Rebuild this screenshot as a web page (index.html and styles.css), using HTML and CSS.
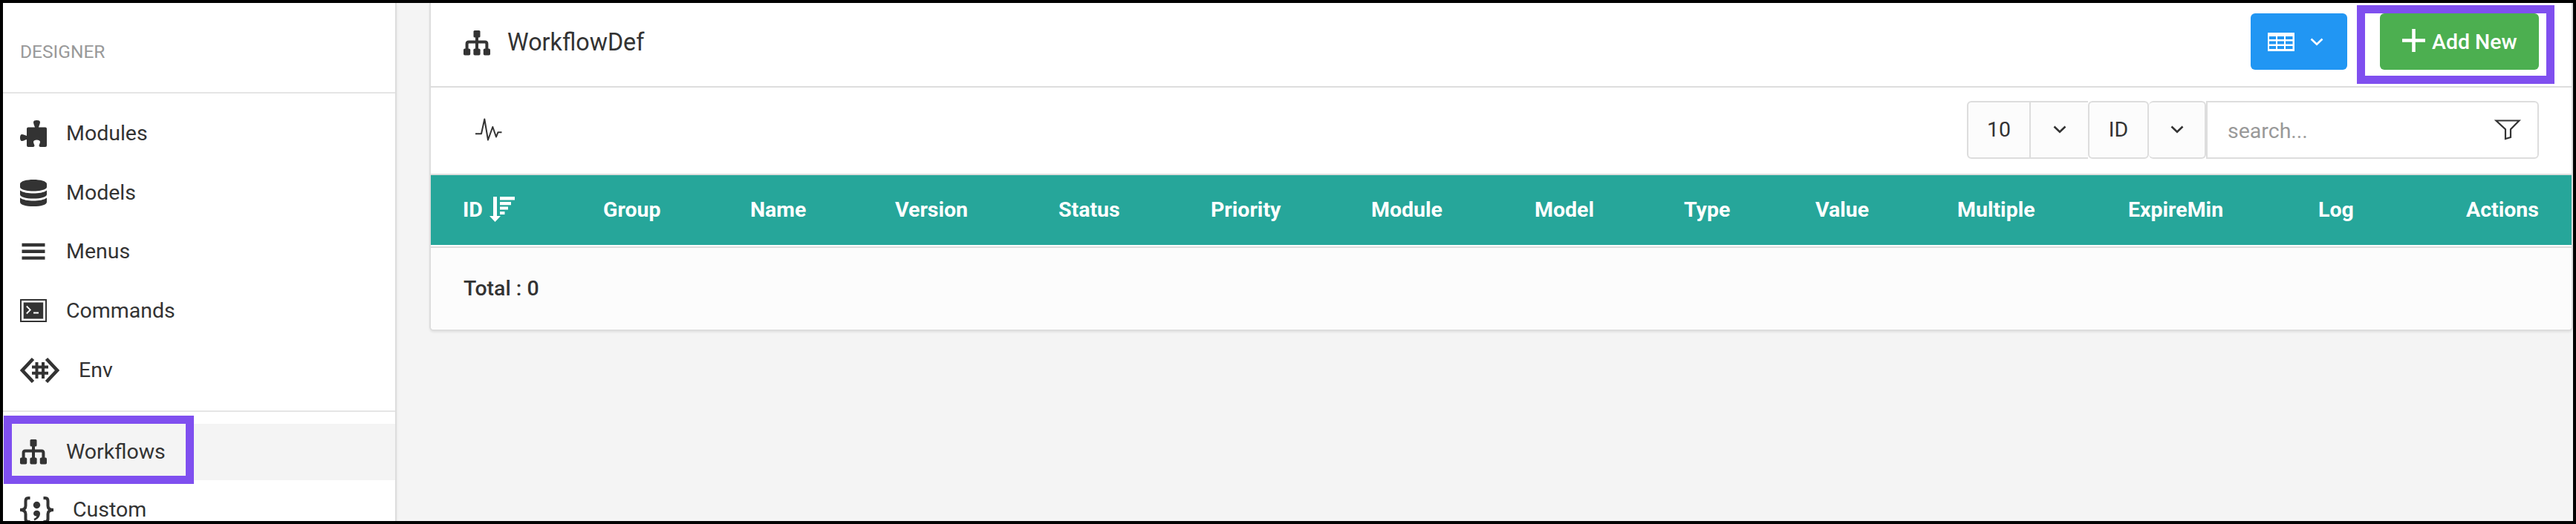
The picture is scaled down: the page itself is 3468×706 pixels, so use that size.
FILE: index.html
```html
<!DOCTYPE html>
<html lang="en">
<head>
<meta charset="utf-8">
<title>WorkflowDef</title>
<link rel="stylesheet" href="styles.css">
</head>
<body>
<svg class="sprite" width="0" height="0">
  <symbol id="tree" viewBox="0 0 36 34">
    <g fill="currentColor"><rect x="13.5" y="0" width="9" height="9.5" rx="1.5"/><rect x="0" y="24.5" width="9.2" height="9" rx="1.8"/><rect x="13.4" y="24.5" width="9.2" height="9" rx="1.8"/><rect x="26.8" y="24.5" width="9.2" height="9" rx="1.8"/></g>
    <path d="M18 8v18M4.6 26V18q0-2.5 2.5-2.5h21.800q2.500 0 2.500 2.500v8" fill="none" stroke="currentColor" stroke-width="4"/>
  </symbol>
  <symbol id="chevron" viewBox="0 0 18 11"><path d="M1.500 1.500L9 8.800l7.500-7.300" fill="none" stroke="currentColor" stroke-width="2.600"/></symbol>
</svg>
<div class="app">
  <aside class="sidebar">
    <div class="section-title">DESIGNER</div>
    <nav class="nav">
      <a class="item tall"><svg class="ico puzzle" viewBox="0 0 36 36"><path fill="currentColor" d="M20 9.500c-1-3-2-5-2-7C18 .8 20 0 22.500 0s4.500.8 4.500 2.500c0 2-1.200 4-2 7H34q2 0 2 2V34q0 2-2 2h-6.500q-2 0-2-2c.5-2 1.500-3 1.500-5 0-1.500-2-2.500-4.500-2.500S18 27.500 18 29c0 2 1 3 1.500 5q0 2-2 2H11q-2 0-2-2v-8c-3 .5-4 2-6.500 2C.8 28 0 26 0 23.500S.8 19 2.500 19c2.500 0 3.500 1.200 6.500 2v-9.500q0-2 2-2z"/></svg>Modules</a>
      <a class="item"><svg class="ico" viewBox="0 0 36 36"><g fill="currentColor"><path d="M18 0c9 0 18 2 18 6v4c0 3-8 5.500-18 5.500S0 13 0 10V6c0-4 9-6 18-6z"/><path d="M0 14.500c4 3 11 4 18 4s14-1 18-4V20c0 3.500-8 5.500-18 5.500S0 23.500 0 20z"/><path d="M0 24.500c4 3 11 4 18 4s14-1 18-4V30c0 4-8 6-18 6S0 34 0 30z"/></g></svg>Models</a>
      <a class="item tall"><svg class="ico" viewBox="0 0 36 36"><path d="M2.500 9h31M2.500 17.800h31M2.500 26.600h31" stroke="currentColor" stroke-width="4.400"/></svg>Menus</a>
      <a class="item tall"><svg class="ico" viewBox="0 0 36 36"><path d="M1 3h34v29H1z" fill="none" stroke="currentColor" stroke-width="2"/><path d="M4.700 6.500h26.500v22H4.700z" fill="currentColor"/><path d="M8.800 11.500l5 5-5 5M18 20.500h7" fill="none" stroke="#fff" stroke-width="1.800"/></svg>Commands</a>
      <a class="item"><svg class="ico ico-env" viewBox="0 0 53 34"><g fill="none" stroke="currentColor"><path stroke-width="4.600" d="M17.500 1.500L3 17l14.500 15.500M35.500 1.500L50 17 35.500 32.500"/><path stroke-width="4" d="M22.500 6v22M31 6v22M16 12.500h22M16 20.800h22"/></g></svg>Env</a>
    </nav>
    <nav class="nav">
      <a class="item active"><svg class="ico ico-tree"><use href="#tree"/></svg>Workflows<span class="marker"></span></a>
      <a class="item custom"><svg class="ico ico-code" viewBox="0 0 45 36"><g fill="none" stroke="currentColor" stroke-width="4"><path d="M13.500 2H11Q7.500 2 7.500 6v6.500Q7.500 18 0 18q7.500 0 7.500 5.500V30q0 4 3.500 4h2.500M31.500 2H34q3.500 0 3.500 4v6.500q0 5.500 7.500 5.500-7.500 0-7.500 5.500V30q0 4-3.500 4h-2.500"/></g><circle cx="22.500" cy="11.500" r="4.700" fill="currentColor"/><path d="M18 22.500a4.600 4.600 0 0 1 9 0q.5 6-7.500 10l-1-2.500q4-2 3.800-3.500-4.300-.2-4.300-4z" fill="currentColor"/></svg>Custom</a>
    </nav>
  </aside>
  <main class="main">
    <section class="card">
      <header class="card-head">
        <svg class="ico-tree"><use href="#tree"/></svg>
        <h1 class="title">WorkflowDef</h1>
        <button class="btn view"><svg class="grid-ico" viewBox="0 0 36 25"><path fill="#fff" d="M0 0h36v25H0z"/><path fill="#2196f3" d="M2 5h9v4H2zm11 0h9v4h-9zm11 0h9.500v4H24zM2 11.500h9v4H2zm11 0h9v4h-9zm11 0h9.500v4H24zM2 18h9v4H2zm11 0h9v4h-9zm11 0h9.500v4H24z"/></svg><svg class="chev"><use href="#chevron"/></svg></button>
        <button class="btn add"><svg class="plus" viewBox="0 0 31 31"><path d="M15.500 0v31M0 15.500h31" stroke="#fff" stroke-width="4.600"/></svg>Add New<span class="marker"></span></button>
      </header>
      <div class="toolbar">
        <svg class="pulse" viewBox="0 0 36 32"><path d="M0 21.300h8L12.300 1.500 17 29.500 23.300 12 28 25.500l2.500-6.300H35.500" fill="none" stroke="currentColor" stroke-width="2" stroke-linejoin="round"/></svg>
        <div class="filters">
          <span class="cell size">10</span><span class="cell size-dd"><svg class="chev"><use href="#chevron"/></svg></span><span class="cell field">ID</span><span class="cell field-dd"><svg class="chev"><use href="#chevron"/></svg></span>
          <div class="search"><span>search...</span><svg class="funnel" viewBox="0 0 36 28"><path d="M2.500 1.500h31L22 13.200v10.800L15 26V13.200z" fill="none" stroke="currentColor" stroke-width="2.200"/></svg></div>
        </div>
      </div>
      <div class="thead">
        <span>ID<svg class="sort" viewBox="0 0 34 34"><path fill="#fff" d="M5 0h5v26h5L7.500 34 0 26h5zM14 0h20v4.500H14zM14 7h15v4.300H14zM14 13.500h11v4H14zM14 20h6.500v4H14z"/></svg></span><span>Group</span><span>Name</span><span>Version</span><span>Status</span><span>Priority</span><span>Module</span><span>Model</span><span>Type</span><span>Value</span><span>Multiple</span><span>ExpireMin</span><span>Log</span><span>Actions</span>
      </div>
      <footer class="card-foot">Total : 0</footer>
    </section>
  </main>
</div>
</body>
</html>
```
FILE: styles.css
```css
* { box-sizing: border-box; }
body { margin: 0; font-family: Roboto, "Liberation Sans", sans-serif; font-size: 28.5px; color: #333; }
svg { display: block; flex: none; }
.sprite { position: absolute; }
.app { display: flex; width: 3468px; height: 706px; border: 4px solid #000; background: #f4f4f4; overflow: hidden; }
.sidebar { width: 530px; flex: none; background: #fff; border-right: 2px solid #ddd; box-shadow: 0 2px 3px rgba(0,0,0,.08); }
.section-title { height: 122px; padding: 50px 23px 0; border-bottom: 2px solid #e5e5e5; color: #999; font-size: 24.5px; line-height: 32px; }
.nav { padding: 16px 0; }
.nav + .nav { border-top: 2px solid #e5e5e5; }
.item { position: relative; display: flex; align-items: center; height: 76px; padding: 0 23px; gap: 26px; margin-bottom: 3px; line-height: 40px; }
.item.tall { margin-bottom: 4px; }
.item:last-child { margin-bottom: 0; }
.item.active { background: #f4f4f4; margin-bottom: 2px; }
.ico { width: 36px; height: 36px; }
.ico-env { width: 53px; height: 34px; }
.ico-code { width: 45px; height: 36px; }
.ico-tree { width: 36px; height: 34px; }
.marker { position: absolute; border: 11px solid #7f4fef; }
.active .marker { left: 1px; top: -11px; width: 256px; height: 92px; }
.main { flex: 1; padding-left: 44px; }
.card { width: 2886px; height: 442px; background: #fff; border: 2px solid #ddd; border-top: 0; border-radius: 0 0 6px 6px; box-shadow: 0 2px 3px rgba(0,0,0,.07); overflow: hidden; }
.card-head { display: flex; align-items: flex-start; height: 114px; padding: 14px 44px 0; border-bottom: 2px solid #ddd; }
.card-head > .ico-tree { margin-top: 23px; }
.title { margin: 19px auto 0 23px; font-size: 32.3px; font-weight: 400; line-height: 40px; }
.btn { position: relative; display: flex; align-items: center; height: 76px; padding: 0; border: 0; border-radius: 6px; color: #fff; font: inherit; font-weight: 500; }
.view { width: 130px; padding: 0 32px 0 23px; justify-content: space-between; background: #2196f3; margin-right: 44px; }
.grid-ico { width: 36px; height: 25px; }
.chev { width: 18px; height: 11px; }
.add { width: 214px; padding-left: 30px; gap: 9px; background: #4caf50; }
.plus { width: 31px; height: 31px; margin-top: -3px; }
.add .marker { left: -31px; top: -11px; width: 266px; height: 106px; }
.toolbar { display: flex; align-items: center; justify-content: space-between; height: 118px; padding: 0 44px 2px 60px; border-bottom: 2px solid #ddd; }
.pulse { width: 36px; height: 32px; }
.filters { display: flex; height: 78px; }
.cell { display: flex; align-items: center; justify-content: center; padding-bottom: 2px; border: 2px solid #ddd; background: #fcfcfc; }
.size { width: 86px; border-radius: 6px 0 0 6px; }
.size-dd { width: 77px; border-left: 0; border-right: 0; }
.field { width: 82px; border-radius: 6px; }
.field-dd { width: 77px; border-left: 0; border-radius: 6px; }
.search { display: flex; align-items: center; justify-content: space-between; width: 448px; padding: 0 22px 0 27px; border: 2px solid #ddd; border-radius: 0 6px 6px 0; color: #999; }
.search span { padding-top: 2px; }
.funnel { width: 36px; height: 28px; color: #333; }
.thead { display: grid; grid-template-columns: 189px 198px 195px 220px 205px 216px 220px 201px 177px 191px 230px 256px 199px 1fr; align-items: center; height: 94px; padding: 0 0 2px 43px; background: #26a69a; color: #fff; font-weight: 700; }
.thead span { display: flex; align-items: center; gap: 9px; white-space: nowrap; }
.sort { width: 34px; height: 34px; }
.card-foot { height: 114px; margin-top: 2px; padding: 35px 44px; border-top: 2px solid #ddd; background: #fcfcfc; font-weight: 500; line-height: 40px; }
```
